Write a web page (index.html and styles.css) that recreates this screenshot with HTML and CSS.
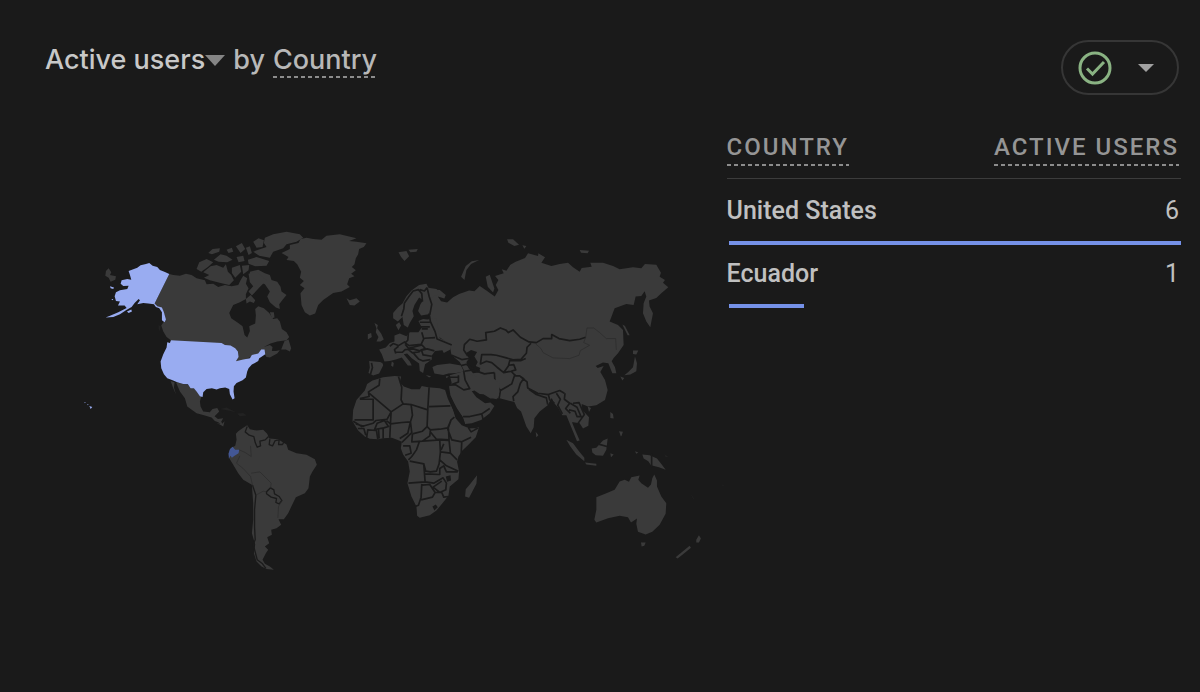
FILE: index.html
```html
<!DOCTYPE html>
<html lang="en">
<head>
<meta charset="utf-8">
<meta name="viewport" content="width=device-width, initial-scale=1">
<title>Active users by Country</title>
<link rel="stylesheet" href="styles.css">
</head>
<body>
<main class="card">
  <header class="card-header">
    <h1 class="title">
      <button class="metric" type="button">Active users<svg class="metric-caret" viewBox="0 0 20 11" aria-hidden="true"><path d="M0 0h20L10 11z"/></svg></button>
      <span>by</span>
      <span class="dashed">Country</span>
    </h1>
    <button class="status" type="button" aria-label="Data quality">
      <svg class="status-check" viewBox="0 0 34 34" aria-hidden="true"><circle cx="17" cy="17" r="15"/><path d="M9 17.500l5.500 5.500L26 11"/></svg>
      <svg class="status-caret" viewBox="0 0 16 8" aria-hidden="true"><path d="M0 0h16L8 8z"/></svg>
    </button>
  </header>
  <div class="content">
    <svg class="map" viewBox="45 220 682 360" role="img" aria-label="World map of active users">
      <!-- North America -->
      <g transform="translate(190 225) scale(.33333)">
        <path class="land" d="M-62 147L-50 150-30 152-12 146 5 150 20 160 45 166 50 178 70 176 85 186 105 180 125 184 145 180 152 166 160 152 172 160 168 176 176 190 168 208 168 222 150 232 130 240 118 264 124 280 145 294 158 304 164 330 172 338 180 318 178 304 196 296 198 272 196 252 205 244 222 250 238 264 250 282 262 280 270 290 276 312 290 322 298 336 290 346 262 350 242 356 222 366 240 360 248 366 246 378 258 378 270 376 262 386 240 398 230 396 220 380 140 414 90 370-60 360-57 346-70 336-80 320-86 302-78 290-76 270-84 250-100 244-106 236z"/>
        <path class="land" d="M-42 472L-30 500-15 520-8 545 20 565 45 572 65 578 75 588 85 592 100 604 94 590 100 580 84 582 74 574 88 560 82 549 68 552 60 562 40 560 32 545 30 530 34 516 10 484zM-58 468L-50 490-42 508-48 488-46 472z"/>
        <path class="land" d="M284 348L296 344 304 370 300 380 288 374 274 374z"/>
        <path class="land" d="M180 140L205 134 225 145 240 150 245 165 262 170 272 185 275 200 290 210 280 222 268 238 270 252 258 248 240 232 232 215 240 200 225 178 210 172 205 185 190 178 180 165z"/>
        <path class="land" d="M176 146L200 140 230 166 212 184 186 212 176 200 190 184 180 172zM168 222L182 210 196 226 192 234 180 230 170 236zM240 262L252 262 254 278 246 280z"/>
        <path class="land" d="M40 142L62 124 80 120 100 128 108 118 114 140 124 150 132 166 118 180 92 174 60 166 42 158 58 150zM20 132L28 112 50 102 70 112 54 126 34 140zM55 84L68 72 90 70 88 80 66 88zM72 104L92 88 110 92 128 104 112 112 86 110zM110 74L126 68 130 80 116 84zM126 128L150 120 154 140 136 158 126 144zM140 96L160 92 164 108 146 112zM138 64L156 54 166 72 152 84zM156 122L178 120 176 136 160 148zM168 68L180 64 186 84 176 90zM174 104L200 96 238 108 230 122 196 124 176 116z"/>
        <path class="land" d="M225 38L250 28 290 20 330 28 340 38 320 50 290 58 280 70 250 80 240 98 208 92 190 80 212 72 230 66 222 54zM190 50L206 40 222 46 218 66 200 68z"/>
        <path class="land" d="M275 84L300 72 300 60 326 54 332 42 350 38 370 42 395 44 410 32 450 28 500 40 478 48 500 50 530 55 522 66 508 72 505 88 498 100 494 118 486 126 498 136 484 146 494 154 478 160 472 178 480 186 455 200 430 204 400 225 385 240 376 266 360 272 345 262 335 240 332 205 344 190 330 180 342 168 330 158 334 140 322 118 312 108 290 105 296 96z"/>
        <path class="land" d="M470 220L480 226 500 220 510 230 494 242 480 240z"/>
        <path class="usa" d="M-57 346L95 354 105 360 122 362 136 370 144 380 146 396 138 409 160 404 180 400 186 390 205 386 214 374 224 374 226 388 214 396 208 400 205 408 195 414 186 419 176 430 172 440 168 458 158 466 140 474 132 484 131 500 134 520 128 524 120 508 118 492 106 488 90 490 80 494 66 490 50 492 40 502 38 516 30 514 20 500 12 490 2 490-6 478-20 477-38 472-52 466-68 460-78 448-86 430-88 410-80 388-70 368-68 352-60 354z"/>
        <path class="usa" d="M-62 147L-75 141-90 135-98 126-112 122-122 114-132 117-148 121-158 128-170 133-184 138-180 150-176 164-188 162-205 166-208 176-200 183-184 182-188 192-210 196-222 202-226 214-222 228-210 230-216 242-196 242-190 249-215 262-238 272-253 278-230 276-210 268-192 256-175 246-166 234-154 222-150 226-158 238-140 234-125 236-108 238-102 246-92 250-84 262-84 286-76 292-72 284-78 262-84 248-98 244-106 236zM-189 260L-176 254-174 260-184 264zM-240 184L-228 188-230 192-238 190zM-236 222L-230 222-232 226z"/>
        <path class="usa" d="M-302 543L-293 546-298 552zM-317 531L-313 532-315 535zM-308 537L-304 539-307 541z"/>
        <path class="land" d="M-252 138L-244 130-236 142-240 150-222 154-224 164-238 170-244 158-254 152z"/>
        <path class="faint" d="M92 552L110 548 138 562 122 558zM142 566L160 564 170 572 150 574zM-94 300L-88 304-90 318-94 312z"/>
      </g>
      <!-- South America -->
      <g transform="translate(210 410) scale(.33333)">
        <path class="land" d="M78 72L85 64 100 54 112 46 120 58 140 62 160 60 172 72 178 86 205 88 220 98 230 104 235 120 260 130 290 135 315 148 321 165 308 185 300 200 296 235 285 250 258 262 247 285 235 310 222 328 206 328 214 345 200 355 184 360 186 375 172 382 178 400 165 410 175 420 168 430 158 450 165 462 180 470 192 480 170 478 155 470 140 455 132 430 136 404 126 370 130 330 130 280 126 225 100 210 85 190 70 165 58 145 56 130 62 115 76 108 80 90z"/>
        <path class="land" d="M20 40L36 42 44 34 40 50 30 44zM0 6L14 0 18 8 4 10z"/>
        <path class="border slim" d="M112 50L106 66 118 76 132 80 136 98 142 112 152 108 150 94 166 90 176 80M180 88L178 104 188 108 196 92 208 90 206 104 218 104 222 96M128 226L138 256 134 300 134 350 136 390 130 404 142 450 158 462 168 476M170 246L182 234 192 240 194 252 208 260 216 272 208 282 198 278 200 266 184 262 170 252z"/>
        <path class="border thin" d="M88 120L106 128 124 140 122 108M90 138L80 160 100 176 122 200 128 226M124 190L150 186 184 220 182 234M138 256L160 244 170 246M216 272L206 290 204 324"/>
        <path class="ecuador" d="M60 118L68 111 76 120 88 120 86 130 74 138 66 144 62 138 57 146 56 132z"/>
      </g>
      <!-- Russia and Asia -->
      <g transform="translate(460 230) scale(.33333)">
        <path class="land" d="M-94 178L-60 180-42 195-46 206-66 200-56 214-38 218-20 202-2 192 28 182 44 184 60 168 80 182 105 200 116 180 108 165 116 150 106 138 132 130 126 118 140 122 152 104 168 95 196 84 205 70 235 78 236 70 256 82 245 98 275 108 300 102 325 98 340 112 360 125 366 114 396 110 392 98 430 98 460 108 480 118 520 112 545 115 556 102 590 104 604 128 600 140 616 150 610 158 626 172 605 190 590 204 568 212 570 230 580 250 572 292 560 275 550 250 552 220 560 200 555 184 545 198 528 200 522 225 500 222 465 235 450 275 475 285 490 300 492 345 475 370 462 384 456 394 466 412 470 430 458 430 446 400 430 398 408 408 414 414 432 408 422 426 436 450 444 480 436 510 410 526 385 530 366 522 368 540 388 562 386 588 370 596 360 580 336 576 330 560 346 600 360 632 352 634 320 556 308 556 296 534 284 520 276 504 264 526 240 545 224 565 222 592 213 610 200 590 184 545 172 534 164 516 145 512 120 505 92 506 75 495 60 484 45 472 24 446 14 424 0 396-25 375-30 344-70 315-92 265z"/>
        <path class="sea" d="M18 370L34 360 52 366 44 380 54 396 48 408 62 414 56 428 40 430 26 414 20 396 28 386z"/>
        <path class="land" d="M4 140L18 108 36 94 58 90 34 102 20 120 14 150zM78 140L90 134 104 176 100 188 84 170zM142 28L160 28 178 44 164 48 146 38zM188 46L200 48 194 56zM360 60L388 62 384 70 364 68zM488 284L496 288 510 316 504 316z"/>
        <path class="land" d="M520 362L536 362 530 374 520 372zM526 380L532 400 530 424 512 434 494 436 506 426 520 412zM482 440L494 444 488 452zM384 530L394 534 388 546zM452 546L460 552 462 566 452 564zM478 604L490 606 484 620zM228 606L236 616 230 622z"/>
        <path class="land" d="M320 630L340 640 358 664 374 684 374 694 350 674 332 650zM396 656L410 654 430 632 444 626 440 660 430 678 408 676 398 668zM376 698L410 702 410 708 380 704zM452 670L462 674 454 682z"/>
        <path class="border" d="M24 378L12 360 14 344 30 328 52 334 80 330 78 308 104 304 122 294 138 300 146 308 160 300 182 322 208 336 230 338 250 326 276 326 276 314 298 326 330 332 360 328 378 322"/>
        <path class="border" d="M214 340L202 352 200 370 184 388 160 390 140 384 110 376 94 374 66 374 62 402 80 394 96 398 112 412 132 428 146 408 150 392 184 392 198 386M132 428L154 424 168 420 162 404 148 406M154 424L168 438 180 438 192 446 182 460 174 486 160 500 162 514M104 428L106 460 122 482 156 462 166 432M122 482L118 506M14 424L40 420 74 432 104 428M182 440L202 456 204 474 234 490 266 494 300 482 314 490M208 478L230 494 260 504 264 524M266 494L270 510 284 520M290 490L302 508 294 526 308 552M316 490L314 508 330 520 318 536 332 550M332 520L352 532 364 560 352 560 346 544 328 540M340 520L358 518 374 554 354 582M414 642L442 650"/>
        <path class="border thin" d="M378 322L382 294 402 294 420 308 440 326 468 326 470 360M228 342L244 356 250 368 280 384 330 386 358 376 362 362 390 346 372 338 378 322"/>
      </g>
      <!-- Europe -->
      <g transform="translate(340 235) scale(.33333)">
        <path class="land" d="M160 234L174 218 188 206 200 184 216 166 238 150 260 146 266 158 290 162 300 174 274 190 276 214 266 238 244 242 235 228 242 208 250 196 238 188 224 210 218 228 222 244 210 264 204 278 192 270 188 246 174 260 160 250z"/>
        <path class="land" d="M168 270L178 262 184 272 176 286zM104 264L114 270 112 280 124 296 132 314 122 320 110 320 116 306 108 292 110 280zM84 298L94 294 96 306 84 314zM176 52L200 48 208 64 194 78 184 66zM206 44L234 42 230 50 212 52z"/>
        <path class="land" d="M118 344L138 338 150 324 164 320 164 302 180 296 200 304 210 292 236 292 246 278 236 258 250 252 262 254 290 250 300 310 335 326 332 344 312 354 308 346 286 348 276 362 276 374 256 388 250 414 240 408 238 386 216 370 202 356 192 358 210 380 216 392 204 392 186 368 168 374 150 378 134 380 126 358z"/>
        <path class="land" d="M88 378L128 382 130 392 118 416 100 422 86 414 90 398zM278 396L292 390 330 386 364 392 372 410 350 414 326 416 310 420 284 416zM156 380L162 384 160 396 154 392zM258 420L274 424 268 428zM318 424L328 424 320 430z"/>
        <path class="border" d="M185 244L192 222 194 204 208 184 220 168 236 164 246 176 248 200M240 164L254 168 262 158M262 158L268 184 276 208 270 240M268 236L272 260 286 290 292 312 316 322 336 330M240 262L270 262M236 276L270 276M246 282L264 282M206 292L204 316 196 324 208 332 244 328 252 312 246 292M254 310L286 308M196 320L176 332 160 326 150 334M168 356L164 344 176 334M196 328L206 340 232 334 246 330 256 340 240 348 220 342 196 344 188 352 166 352M206 344L218 354 240 350M244 342L250 360 276 364M222 356L236 372 250 378 272 374M246 346L262 342 284 348M95 384L98 398 92 418M124 380L132 384"/>
        <path class="border" d="M334 360L366 374 392 370M364 392L380 388 396 400 420 408"/>
      </g>
      <!-- Middle East and Africa -->
      <g transform="translate(340 360) scale(.33333)">
        <path class="land" d="M330 46L372 34 384 40 410 50 426 50 446 44 480 70 478 106 470 118 452 112 440 104 420 102 404 92 396 94 410 112 436 130 452 128 464 138 450 160 424 180 396 190 376 192 368 170 350 146 332 106 328 80 336 70z"/>
        <path class="land" d="M98 62L130 52 165 48 184 50 180 68 192 80 215 88 240 88 246 78 265 82 300 85 316 90 324 116 340 150 348 176 366 196 390 206 418 202 408 232 386 255 368 272 356 290 352 306 358 335 356 358 330 380 326 408 308 430 290 452 270 466 240 474 232 468 230 440 215 410 203 370 210 335 205 305 190 284 183 265 186 246 172 240 156 234 130 235 115 238 90 237 75 230 55 212 38 184 40 150 50 120 75 92 82 72zM412 346L410 372 388 414 376 410 378 388 392 372z"/>
        <path class="border" d="M120 56L118 76 86 96 88 110 60 116M60 118L100 118 100 180 44 180M86 98L154 156 142 178 108 182 100 190 66 200 40 184M176 50L186 82 184 120 190 132 154 156M190 132L214 134 264 150 268 82M268 140L332 138M214 134L218 166 212 186 186 188 152 192 140 182M154 156L152 190 150 234M212 186L216 218 200 234 186 248M212 186L204 220 180 236M264 150L262 200 248 214 218 222M262 200L272 210 300 208 324 204 334 180 344 172M272 210L270 228 248 244 216 246 218 222M270 214L290 238 328 240 326 206M334 180L324 208 336 240 366 246 394 232M386 204L394 216 416 204M366 246L364 290M328 242L332 280 352 300M240 242L230 270 216 290 206 300M190 258L210 258 214 280 196 286M248 244L300 240 326 242M300 242L302 276 298 312 290 334 272 336 258 334 252 312 210 304M302 276L332 280M304 270L312 252M300 300L320 318 356 334M252 312L256 366 206 370M256 342L300 344 300 326 312 318 320 336 354 336M256 366L282 370 310 354 320 370 318 390 300 398 280 382 306 364M246 372L244 412 236 436 226 440M246 376L270 374 286 398 278 412 244 420M286 398L306 398 312 412 326 410M80 236L84 210 110 212 114 238M116 206L118 236M130 204L130 236M104 210L112 190 134 182 146 200 132 204 108 208M54 206L72 206 78 226M48 192L74 200"/>
        <path class="border" d="M356 46L356 66 336 74M372 34L376 60 390 86 372 90 346 74 330 76M370 170L390 170 426 162 450 146M426 162L430 178M326 52L356 52"/>
        <path class="sea" d="M320 86L332 110 352 146 370 174 376 192 396 194 414 190 410 206 388 204 366 190 348 170 334 132zM318 350L332 346 334 362 322 366zM278 440L288 434 294 442 284 452z"/>
      </g>
      <!-- Oceania -->
      <g transform="translate(570 430) scale(.33333)">
        <path class="land" d="M80 202L110 190 135 180 150 155 165 150 178 156 185 142 210 137 206 150 215 160 235 174 244 164 248 145 254 134 262 152 262 170 275 200 290 220 288 252 270 285 248 306 228 314 205 306 200 282 202 266 184 278 175 262 150 258 115 265 80 278 74 270 80 240zM214 338L228 338 224 348 216 350zM318 382L340 364 360 348 364 354 344 370 324 386zM380 330L388 316 394 326 388 338 380 338zM218 74L240 76 262 86 278 106 288 120 268 112 244 106 236 94 222 86zM196 64L206 68 200 72zM152 8L158 10 154 20z"/>
        <path class="border" d="M246 72V112"/>
        <path class="faint" d="M458 164L462 166 460 170zM364 192L374 208 370 206zM284 74L296 80 288 82z"/>
      </g>
    </svg>
    <table class="data">
      <thead>
        <tr>
          <th scope="col"><span class="dashed">Country</span></th>
          <th scope="col" class="number"><span class="dashed">Active users</span></th>
        </tr>
      </thead>
      <tbody>
        <tr><th scope="row">United States</th><td class="number">6</td></tr>
        <tr class="bar-row"><td colspan="2"><div class="bar" style="width:100%"></div></td></tr>
        <tr><th scope="row">Ecuador</th><td class="number">1</td></tr>
        <tr class="bar-row"><td colspan="2"><div class="bar" style="width:16.67%"></div></td></tr>
      </tbody>
    </table>
  </div>
</main>
</body>
</html>
```
FILE: styles.css
```css
* {
  box-sizing: border-box;
}

body {
  margin: 0;
  min-height: 100vh;
  background: #1a1a1a;
  color: #c0c0c0;
  font-family: Roboto, "Liberation Sans", sans-serif;
}

button {
  border: 0;
  padding: 0;
  background: none;
  color: inherit;
  font: inherit;
  cursor: pointer;
}

.card {
  padding: 40px 19px 40px 45px;
}

.card-header {
  display: flex;
  justify-content: space-between;
  align-items: flex-start;
  padding-right: 2px;
}

.title {
  display: flex;
  gap: 8px;
  margin: 2px 0 0;
  color: #b8b8b8;
  font-family: Inter, "Open Sans", sans-serif;
  font-size: 27px;
  font-weight: 500;
  line-height: 36px;
}

.metric {
  display: flex;
  align-items: center;
  color: #c8c8c8;
}

.metric-caret {
  width: 20px;
  height: 11px;
  fill: #858585;
}

.dashed {
  display: inline-block;
  background: repeating-linear-gradient(to right, #8c8c8c 0 4px, transparent 4px 7px) left bottom / 100% 2px no-repeat;
}

.status {
  display: flex;
  align-items: center;
  justify-content: space-between;
  width: 118px;
  height: 55px;
  padding: 0 23px 0 15px;
  border: 2px solid #363636;
  border-radius: 28px;
}

.status-check {
  width: 34px;
  height: 34px;
  fill: none;
  stroke: #8ab383;
  stroke-width: 3;
}

.status-caret {
  width: 16px;
  height: 8px;
  fill: #a0a0a0;
}

.content {
  display: grid;
  grid-template-columns: 3fr 2fr;
  align-items: start;
  padding-top: 36px;
}

.map {
  display: block;
  width: 100%;
  margin-top: 89px;
}

.land {
  fill: #3a3a3a;
}

.faint {
  fill: #222222;
}

.sea {
  fill: #1a1a1a;
}

.usa {
  fill: #99acf1;
}

.ecuador {
  fill: #435795;
}

.border {
  fill: none;
  stroke: #1b1b1b;
  stroke-width: 5;
  stroke-linejoin: round;
}

.slim {
  stroke-width: 4;
}

.thin {
  stroke: #2b2b2b;
  stroke-width: 2;
}

.data {
  width: 100%;
  border-collapse: collapse;
  font-size: 25px;
  line-height: 32px;
}

.data th,
.data td {
  padding: 0;
  text-align: left;
}

.data .number {
  padding-right: 2px;
  text-align: right;
}

.data thead th {
  padding-bottom: 16px;
  background: linear-gradient(#3c3c3c, #3c3c3c) left bottom 3px / 100% 1px no-repeat;
  color: #959595;
  font-size: 24px;
  font-weight: 500;
  letter-spacing: 2px;
  text-transform: uppercase;
  vertical-align: top;
}

thead .dashed {
  padding-bottom: 3px;
  vertical-align: top;
}

.data tbody th,
.data tbody .number {
  height: 59px;
  padding-bottom: 1px;
  font-weight: 500;
}

.data tbody .number {
  font-weight: 400;
}

.data .bar-row td {
  height: 4px;
  padding-left: 2px;
}

.bar {
  height: 4px;
  background: #7591e8;
}
```
